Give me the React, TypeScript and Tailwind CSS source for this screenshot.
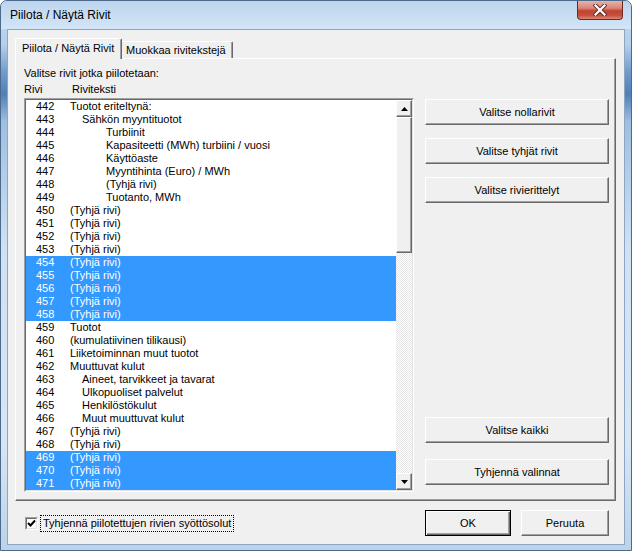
import React from "react";

type Row = [number, string, number, boolean];

const rows: Row[] = [
  [442, "Tuotot eriteltynä:", 0, false],
  [443, "Sähkön myyntituotot", 1, false],
  [444, "Turbiinit", 3, false],
  [445, "Kapasiteetti (MWh) turbiini / vuosi", 3, false],
  [446, "Käyttöaste", 3, false],
  [447, "Myyntihinta (Euro) / MWh", 3, false],
  [448, "(Tyhjä rivi)", 3, false],
  [449, "Tuotanto, MWh", 3, false],
  [450, "(Tyhjä rivi)", 0, false],
  [451, "(Tyhjä rivi)", 0, false],
  [452, "(Tyhjä rivi)", 0, false],
  [453, "(Tyhjä rivi)", 0, false],
  [454, "(Tyhjä rivi)", 0, true],
  [455, "(Tyhjä rivi)", 0, true],
  [456, "(Tyhjä rivi)", 0, true],
  [457, "(Tyhjä rivi)", 0, true],
  [458, "(Tyhjä rivi)", 0, true],
  [459, "Tuotot", 0, false],
  [460, "(kumulatiivinen tilikausi)", 0, false],
  [461, "Liiketoiminnan muut tuotot", 0, false],
  [462, "Muuttuvat kulut", 0, false],
  [463, "Aineet, tarvikkeet ja tavarat", 1, false],
  [464, "Ulkopuoliset palvelut", 1, false],
  [465, "Henkilöstökulut", 1, false],
  [466, "Muut muuttuvat kulut", 1, false],
  [467, "(Tyhjä rivi)", 0, false],
  [468, "(Tyhjä rivi)", 0, false],
  [469, "(Tyhjä rivi)", 0, true],
  [470, "(Tyhjä rivi)", 0, true],
  [471, "(Tyhjä rivi)", 0, true],
];

const raised =
  "border border-t-white border-l-white border-r-[#696969] border-b-[#696969] shadow-[inset_-1px_-1px_0_#a0a0a0] bg-[#f0f0f0]";

function Nappi({ label, className }: { label: string; className?: string }) {
  return (
    <div className={`${raised} h-[26px] flex items-center justify-center ${className ?? ""}`}>
      {label}
    </div>
  );
}

function Rivi({ row }: { row: Row }) {
  const [nro, teksti, taso, valittu] = row;
  const sisennys = taso === 1 ? "pl-[12px]" : taso === 3 ? "pl-[36px]" : "";
  return (
    <div
      className={`flex h-[13px] leading-[13px] pl-[10px] whitespace-nowrap ${
        valittu ? "bg-[#3399ff] text-white" : "text-black"
      }`}
    >
      <span className="w-[34px]">{nro}</span>
      <span className={sisennys}>{teksti}</span>
    </div>
  );
}

function Vierityspalkki() {
  return (
    <div className="w-[16px] flex flex-col bg-[repeating-conic-gradient(#ffffff_0_25%,#e4e4e4_0_50%)] bg-[length:2px_2px]">
      <div className={`${raised} h-[17px] flex items-center justify-center`}>
        <svg width="7" height="4" viewBox="0 0 7 4">
          <path d="M3.5 0 L7 4 L0 4 Z" fill="#000" />
        </svg>
      </div>
      <div className={`${raised} h-[136px]`} />
      <div className="flex-1" />
      <div className={`${raised} h-[17px] flex items-center justify-center`}>
        <svg width="7" height="4" viewBox="0 0 7 4">
          <path d="M0 0 L7 0 L3.5 4 Z" fill="#000" />
        </svg>
      </div>
    </div>
  );
}

export default function App() {
  return (
    <div className="w-[632px] h-[551px] font-['Liberation_Sans',Arial,sans-serif] text-[11px] text-black">
      <div className="w-full h-full flex flex-col rounded-t-[7px] border border-[#4d6a8a] bg-[linear-gradient(180deg,#c6dcf2_0%,#b4cfea_8%,#6f9bcb_13%,#4f80b6_17%,#9dbfe2_22%,#cfe1f4_45%,#d6e6f5_80%,#bcd3ea_100%)] overflow-hidden">
        {/* otsikkopalkki */}
        <div className="h-[28px] flex items-start justify-between bg-[linear-gradient(180deg,#bcd5ee_0%,#c8ddf3_50%,#d3e5f7_100%)] rounded-t-[6px]">
          <span className="ml-[9px] mt-[7px] text-[12px] leading-[15px]">Piilota / Näytä Rivit</span>
          <div className="mr-[8px] w-[46px] h-[19px] rounded-b-[4px] border border-t-0 border-[#6a2a22] bg-[linear-gradient(180deg,#e8b2a8_0%,#d98577_40%,#c2412f_55%,#c9503e_80%,#dc8a74_100%)] flex items-center justify-center">
            <svg width="14" height="12" viewBox="0 0 14 12">
              <path d="M2.5 1.5 L11.5 10.5 M11.5 1.5 L2.5 10.5" stroke="#5b2a24" strokeWidth="4" strokeLinecap="square" />
              <path d="M2.5 1.5 L11.5 10.5 M11.5 1.5 L2.5 10.5" stroke="#ffffff" strokeWidth="2.2" strokeLinecap="square" />
            </svg>
          </div>
        </div>

        {/* asiakasalue */}
        <div className="ml-[6px] w-[618px] h-[516px] border border-[#8ea6c2] bg-[#f0f0f0] flex flex-col">
          {/* välilehdet */}
          <div className="flex items-end h-[20px] mt-[8px] pl-[7px]">
            <div className="relative z-10 -mb-[1px] h-[21px] w-[107px] border border-b-0 border-t-white border-l-white border-r-[#696969] shadow-[inset_-1px_0_0_#a0a0a0] rounded-t-[2px] bg-[#f0f0f0] pl-[6px] pt-[3px] leading-[13px]">
              Piilota / Näytä Rivit
            </div>
            <div className="h-[17px] w-[111px] border border-b-0 border-t-white border-l-0 border-r-[#696969] shadow-[inset_-1px_0_0_#a0a0a0] rounded-tr-[2px] bg-[#f0f0f0] pl-[4px] pt-[2px] leading-[13px]">
              Muokkaa rivitekstejä
            </div>
          </div>

          {/* välilehden sisältö */}
          <div className={`${raised} ml-[7px] w-[601px] h-[443px] flex pl-[8px]`}>
            <div className="w-[390px] flex flex-col pt-[8px]">
              <div className="h-[13px] leading-[13px]">Valitse rivit jotka piilotetaan:</div>
              <div className="h-[13px] leading-[13px] mt-[3px] flex">
                <span className="w-[48px]">Rivi</span>
                <span>Riviteksti</span>
              </div>
              <div className="mt-[2px] h-[394px] border border-t-[#a0a0a0] border-l-[#a0a0a0] border-r-white border-b-white">
                <div className="h-full border border-t-[#696969] border-l-[#696969] border-r-[#e3e3e3] border-b-[#e3e3e3] bg-white flex">
                  <div className="flex-1 flex flex-col overflow-hidden">
                    {rows.map((r) => (
                      <Rivi key={r[0]} row={r} />
                    ))}
                  </div>
                  <Vierityspalkki />
                </div>
              </div>
            </div>

            <div className="ml-[11px] w-[184px] flex flex-col pt-[40px]">
              <Nappi label="Valitse nollarivit" />
              <Nappi label="Valitse tyhjät rivit" className="mt-[13px]" />
              <Nappi label="Valitse rivierittelyt" className="mt-[13px]" />
              <Nappi label="Valitse kaikki" className="mt-[214px]" />
              <Nappi label="Tyhjennä valinnat" className="mt-[16px]" />
            </div>
          </div>

          {/* alarivi */}
          <div className="mt-[9px] h-[26px] flex items-center">
            <div className="ml-[17px] w-[13px] h-[13px] border border-t-[#a0a0a0] border-l-[#a0a0a0] border-r-white border-b-white">
              <div className="w-full h-full border border-t-[#696969] border-l-[#696969] border-r-[#e3e3e3] border-b-[#e3e3e3] bg-white flex items-center justify-center">
                <svg width="9" height="9" viewBox="0 0 9 9">
                  <path d="M1 4 L3.5 6.5 L8 1.5" stroke="#000" strokeWidth="2" fill="none" />
                </svg>
              </div>
            </div>
            <div className="ml-[2px] border border-dotted border-black px-[2px] h-[17px] leading-[15px]">
              Tyhjennä piilotettujen rivien syöttösolut
            </div>
            <div className="flex-1" />
            <div className="w-[86px] h-[26px] border border-black shadow-[inset_1px_1px_0_#fff,inset_-1px_-1px_0_#696969,inset_-2px_-2px_0_#a0a0a0] bg-[#f0f0f0] flex items-center justify-center">
              OK
            </div>
            <div className={`${raised} ml-[10px] mr-[15px] w-[88px] h-[26px] flex items-center justify-center`}>
              Peruuta
            </div>
          </div>
        </div>
      </div>
    </div>
  );
}
